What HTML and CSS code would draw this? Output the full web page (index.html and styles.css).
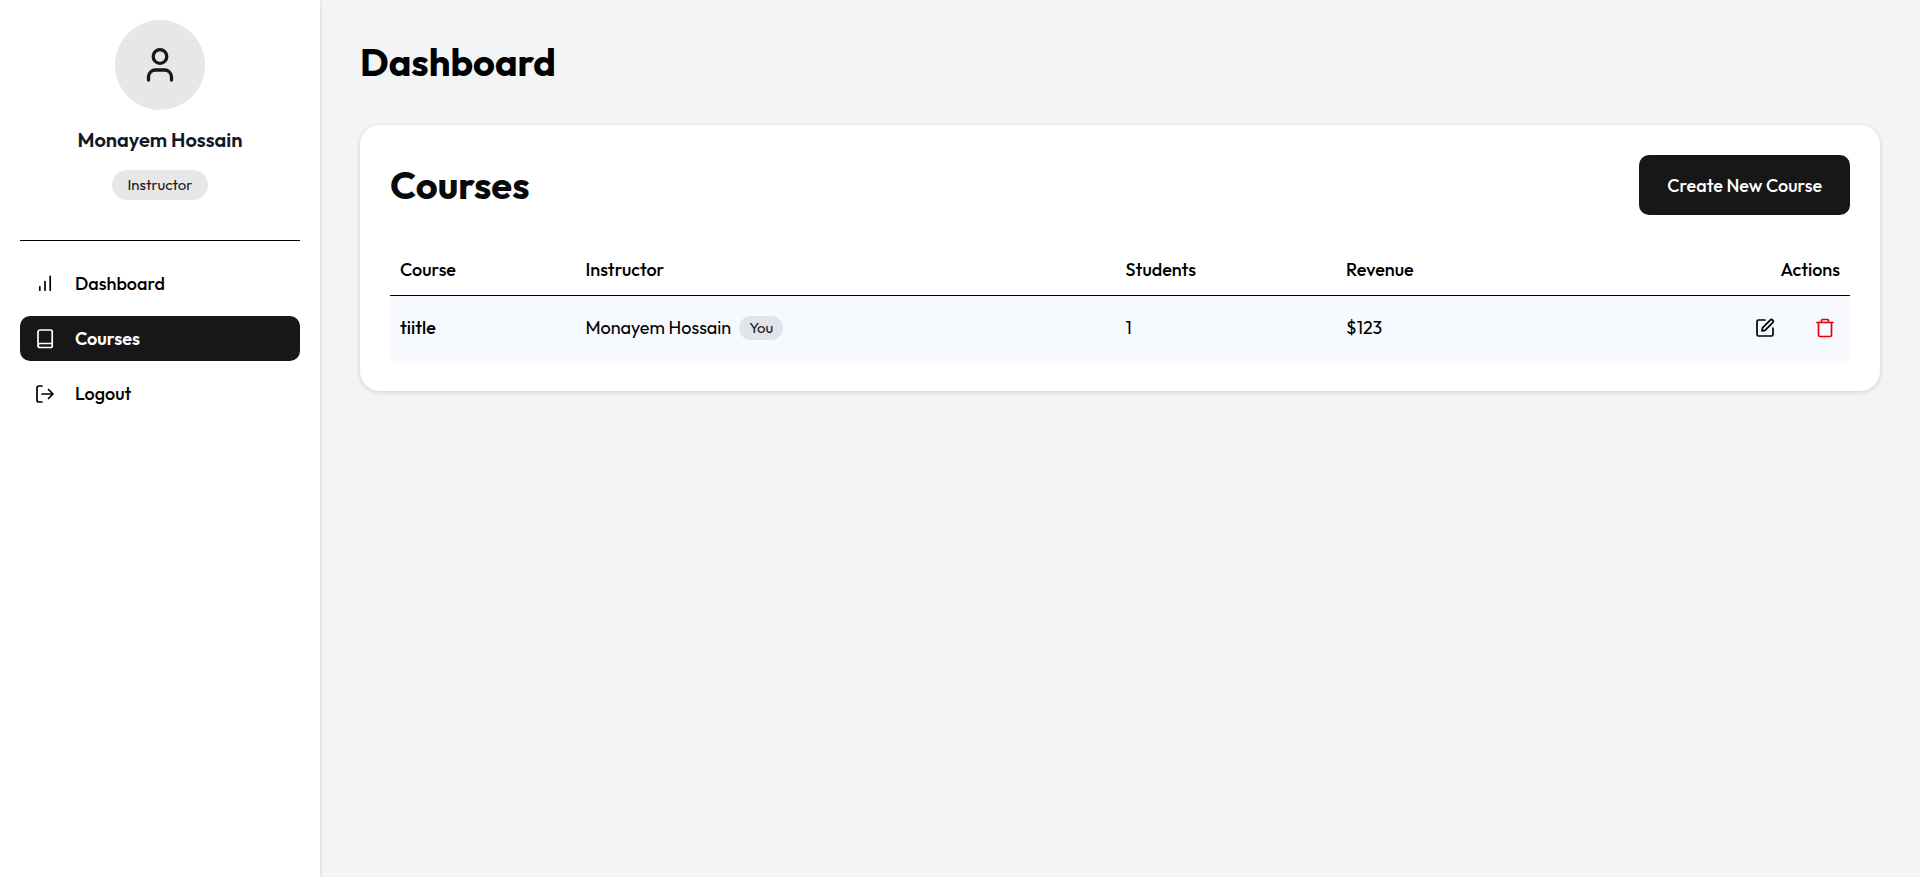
FILE: index.html
```html
<!DOCTYPE html>
<html lang="en">
<head>
<meta charset="utf-8">
<meta name="viewport" content="width=device-width, initial-scale=1">
<title>Courses</title>
<link rel="stylesheet" href="styles.css">
</head>
<body>
<div class="layout">
  <aside class="sidebar">
    <div class="profile">
      <div class="avatar">
        <svg class="avatar-icon" viewBox="0 0 40 40" aria-hidden="true"><circle cx="20" cy="11.500" r="6.800"/><path d="M8.500 35v-3.500a7 7 0 0 1 7-6.500h9a7 7 0 0 1 7 6.500V35"/></svg>
      </div>
      <p class="profile-name">Monayem Hossain</p>
      <span class="role">Instructor</span>
    </div>
    <nav class="menu">
      <a class="menu-item" href="#dashboard"><svg class="icon" viewBox="0 0 20 20" aria-hidden="true"><path d="M4.800 12.800v3.400M10 7.600v8.600M15.200 2.400v13.800"/></svg>Dashboard</a>
      <a class="menu-item active" href="#courses" aria-current="page"><svg class="icon" viewBox="0 0 20 20" aria-hidden="true"><path d="M3 16.500V3a2 2 0 0 1 2-2h11a1.200 1.200 0 0 1 1.200 1.200v15.100a1.200 1.200 0 0 1-1.200 1.200H5a2 2 0 0 1-2-2 2 2 0 0 1 2-2h12"/></svg>Courses</a>
      <button class="menu-item" type="button"><svg class="icon" viewBox="0 0 20 20" aria-hidden="true"><path d="M7 18H4a2 2 0 0 1-2-2V4a2 2 0 0 1 2-2h3M7 10h11M13.500 5.500 18 10l-4.500 4.500"/></svg>Logout</button>
    </nav>
  </aside>
  <main class="content">
    <h1 class="page-title">Dashboard</h1>
    <section class="card">
      <header class="card-header">
        <h2 class="card-title">Courses</h2>
        <button class="create" type="button">Create New Course</button>
      </header>
      <table class="courses">
        <colgroup><col class="col-course"><col class="col-instructor"><col class="col-students"><col></colgroup>
        <thead>
          <tr><th>Course</th><th>Instructor</th><th>Students</th><th>Revenue</th><th class="right">Actions</th></tr>
        </thead>
        <tbody>
          <tr>
            <td class="strong">tiitle</td>
            <td><div class="person">Monayem Hossain<span class="you">You</span></div></td>
            <td>1</td>
            <td>$123</td>
            <td><div class="actions">
              <button class="action" type="button" aria-label="Edit course"><svg class="icon" viewBox="0 0 20 20" aria-hidden="true"><path d="M10 2H3.500A1.500 1.500 0 0 0 2 3.500v13A1.500 1.500 0 0 0 3.500 18h13a1.500 1.500 0 0 0 1.500-1.500V10M7 13l.5-3.200 7.700-7.700a1.700 1.700 0 0 1 2.500 2.500L10 12.300z"/></svg></button>
              <button class="action delete" type="button" aria-label="Delete course"><svg class="icon" viewBox="0 0 20 20" aria-hidden="true"><path d="M2 4.500h16M3.500 4.500V17A1.500 1.500 0 0 0 5 18.500h10a1.500 1.500 0 0 0 1.500-1.500V4.500M6.500 4.500V2.700A1.200 1.200 0 0 1 7.700 1.500h4.600a1.200 1.200 0 0 1 1.200 1.200v1.800"/></svg></button>
            </div></td>
          </tr>
        </tbody>
      </table>
    </section>
  </main>
</div>
</body>
</html>
```
FILE: styles.css
```css
* { box-sizing: border-box; }
body { margin: 0; font-family: Outfit, Lato, sans-serif; font-size: 18px; line-height: 24px; color: #000; background: #f2f4f6; }
h1, h2, p { margin: 0; }
button { font: inherit; color: inherit; border: 0; background: none; cursor: pointer; }
.layout { display: flex; min-height: 100vh; }
.sidebar { flex: 0 0 320px; padding: 20px; background: #fff; box-shadow: 0 1px 4px rgba(0, 0, 0, .16); }
.profile { display: flex; flex-direction: column; align-items: center; padding-bottom: 40px; border-bottom: 1px solid #000; }
.avatar { display: grid; place-items: center; width: 90px; height: 90px; border-radius: 50%; background: #e7e7e7; }
.icon, .avatar-icon { width: 20px; height: 20px; fill: none; stroke: currentColor; stroke-width: 1.700; stroke-linecap: round; stroke-linejoin: round; }
.avatar-icon { width: 40px; height: 40px; color: #171717; stroke-width: 3.300; }
.profile-name { margin: 16px 0; font-size: 20px; line-height: 28px; font-weight: 600; color: #0f172a; }
.role { padding: 3px 15px; border-radius: 15px; font-size: 15px; background: #e7e7e7; color: #171717; }
.menu { display: flex; flex-direction: column; gap: 10px; padding-top: 20px; }
.menu-item { display: flex; align-items: center; gap: 20px; height: 45px; padding: 0 15px; border-radius: 10px; font-weight: 500; color: #000; text-decoration: none; }
.menu-item.active { background: #171717; color: #fff; font-weight: 600; }
.content { flex: 1; min-width: 0; padding: 40px; }
.page-title { margin-bottom: 40px; font-size: 38px; line-height: 45px; font-weight: 700; }
.card { padding: 30px; border-radius: 20px; background: #fff; box-shadow: 0 1px 4px rgba(0, 0, 0, .16); }
.card-header { display: flex; align-items: center; justify-content: space-between; margin-bottom: 30px; }
.card-title { font-size: 38px; line-height: 45px; font-weight: 700; color: #0a0a0a; }
.create { height: 60px; padding: 2px 28px 0; border-radius: 10px; background: #171717; color: #fff; font-weight: 500; }
.courses { width: 100%; table-layout: fixed; border-collapse: collapse; }
.courses th, .courses td { padding: 0 10px; text-align: left; font-weight: 400; }
.courses th { height: 50px; border-bottom: 1px solid #000; font-weight: 500; }
.courses td { height: 66px; }
.courses .strong { font-weight: 500; }
.courses .right { text-align: right; }
.courses tbody tr { background: #f6f9fe; }
.col-course { width: 12.700%; }
.col-instructor { width: 37%; }
.col-students { width: 15.100%; }
.person { display: flex; align-items: center; gap: 8px; }
.you { padding: 0 10px; border-radius: 12px; font-size: 15px; background: #e1e4e8; color: #171717; }
.actions { display: flex; justify-content: flex-end; gap: 30px; }
.action { display: grid; place-items: center; padding: 5px; }
.delete { color: #e7000b; }
```
